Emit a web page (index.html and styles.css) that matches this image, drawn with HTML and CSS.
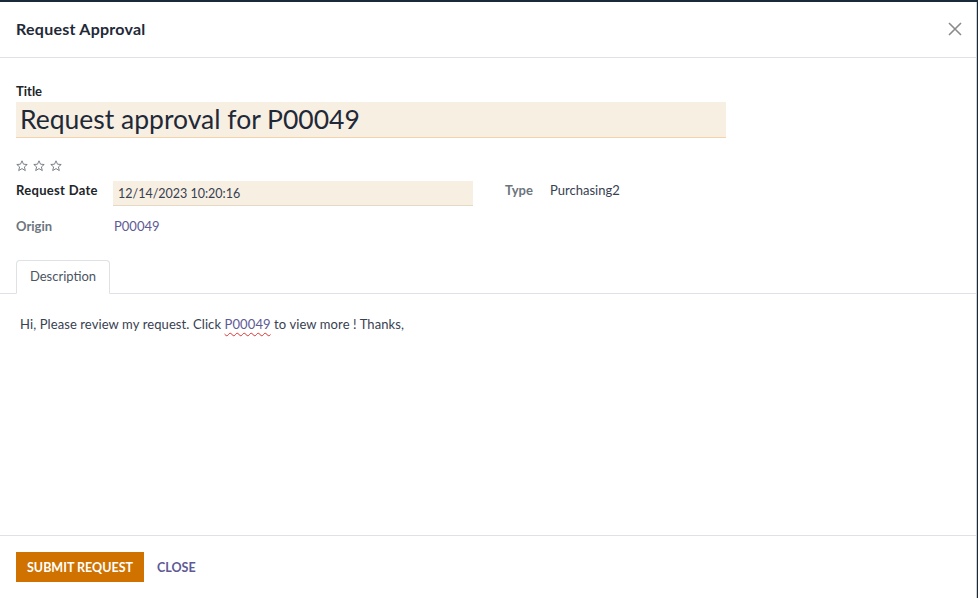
FILE: index.html
```html
<!DOCTYPE html>
<html>
<head>
<meta charset="utf-8">
<link rel="stylesheet" href="styles.css">
</head>
<body>
<div class="backdrop"></div>
<div class="modal">
  <header class="modal-header">
    <h4 class="modal-title">Request Approval</h4>
    <button class="btn-close" aria-label="Close">
      <svg width="14" height="14" viewBox="0 0 14 14"><path d="M1 1 L13 13 M13 1 L1 13" stroke="#8a8a8a" stroke-width="1.6" fill="none"/></svg>
    </button>
  </header>
  <main class="modal-body">
    <div class="sheet">
      <label class="title-label">Title</label>
      <div class="title-input">Request approval for P00049</div>
      <div class="stars">
        <svg width="46" height="12" viewBox="0 0 46 12">
          <g fill="none" stroke="#6c757d" stroke-width="0.9" stroke-linejoin="round">
            <path d="M6 0.8 L7.5 4.2 L11.2 4.5 L8.4 6.9 L9.3 10.6 L6 8.6 L2.7 10.6 L3.6 6.9 L0.8 4.5 L4.5 4.2 Z"/>
            <path transform="translate(17 0)" d="M6 0.8 L7.5 4.2 L11.2 4.5 L8.4 6.9 L9.3 10.6 L6 8.6 L2.7 10.6 L3.6 6.9 L0.8 4.5 L4.5 4.2 Z"/>
            <path transform="translate(34 0)" d="M6 0.8 L7.5 4.2 L11.2 4.5 L8.4 6.9 L9.3 10.6 L6 8.6 L2.7 10.6 L3.6 6.9 L0.8 4.5 L4.5 4.2 Z"/>
          </g>
        </svg>
      </div>
      <div class="fields">
        <div class="group">
          <div class="row">
            <span class="lbl dark">Request Date</span>
            <div class="date-input">12/14/2023 10:20:16</div>
          </div>
          <div class="row origin-row">
            <span class="lbl">Origin</span>
            <a class="link">P00049</a>
          </div>
        </div>
        <div class="group right">
          <div class="row">
            <span class="lbl type-lbl">Type</span>
            <span class="val">Purchasing2</span>
          </div>
        </div>
      </div>
    </div>
    <div class="tabs">
      <div class="tab">Description</div>
    </div>
    <div class="tab-content">
      <p>Hi, Please review my request. Click <span class="spell">P00049</span> to view more ! Thanks,</p>
    </div>
  </main>
  <footer class="modal-footer">
    <button class="btn-primary">SUBMIT REQUEST</button>
    <button class="btn-link">CLOSE</button>
  </footer>
</div>
</body>
</html>
```
FILE: styles.css
```css
* { box-sizing: border-box; }
html, body { margin: 0; padding: 0; }
body {
  width: 978px;
  height: 598px;
  overflow: hidden;
  background: #1b2a38;
  font-family: "Lato", "Noto Sans", sans-serif;
  color: #374151;
  display: flex;
  flex-direction: column;
}
.backdrop { height: 2px; flex: none; }
.modal {
  flex: 1;
  background: #fff;
  display: flex;
  flex-direction: column;
  margin-right: 1px;
  border-right: 1px solid #d0d0d0;
}
.modal-header {
  height: 56px;
  flex: none;
  display: flex;
  align-items: center;
  justify-content: space-between;
  padding: 0 16px 2px 16px;
  border-bottom: 1px solid #dee2e6;
}
.modal-title {
  margin: 0;
  font-size: 16px;
  letter-spacing: 0.25px;
  font-weight: 700;
  color: #1f2937;
}
.btn-close {
  background: none;
  border: 0;
  padding: 0;
  margin-right: -2px;
  width: 14px;
  height: 14px;
  display: flex;
}
.modal-body {
  flex: 1;
  display: flex;
  flex-direction: column;
}
.sheet { padding: 25px 16px 0 16px; }
.title-label {
  display: block;
  font-size: 13px;
  font-weight: 700;
  color: #212529;
  line-height: 16px;
}
.title-input {
  margin-top: 3px;
  width: 710px;
  height: 36px;
  background: #f8efe3;
  border-bottom: 1px solid #f4d3ac;
  font-size: 26.5px;
  line-height: 34px;
  padding-left: 4px;
  color: #1f2937;
}
.stars { margin-top: 22px; height: 12px; line-height: 0; }
.fields {
  display: flex;
  margin-top: 9px;
}
.group { display: flex; flex-direction: column; }
.group.right { margin-left: 32px; }
.row { display: flex; align-items: flex-start; }
.lbl {
  font-size: 13px;
  font-weight: 700;
  color: #6c757d;
  width: 97px;
  padding-top: 1px;
}
.lbl.dark { color: #212529; letter-spacing: 0.3px; }
.type-lbl { width: 45px; }
.date-input {
  width: 360px;
  height: 25px;
  background: #f8efe3;
  border-bottom: 1px solid #e7d8c4;
  font-size: 12.5px;
  padding: 5px 0 0 5px;
  color: #374151;
}
.val { font-size: 13px; padding-top: 1px; color: #374151; }
.origin-row { margin-top: 12px; }
.origin-row .lbl, .origin-row .link { padding-top: 0; }
.link {
  font-size: 13px;
  color: #5e5a94;
  text-decoration: none;
  padding-left: 1px;
}
.tabs {
  margin-top: 27px;
  height: 33px;
  border-bottom: 1px solid #dee2e6;
  padding-left: 16px;
  display: flex;
  align-items: flex-end;
}
.tab {
  width: 94px;
  height: 34px;
  margin-bottom: -1px;
  border: 1px solid #dee2e6;
  border-bottom-color: #fff;
  border-radius: 4px 4px 0 0;
  background: #fff;
  font-size: 13px;
  color: #4b5563;
  text-align: center;
  line-height: 31px;
}
.tab-content { padding: 22px 20px 0 20px; flex: 1; }
.tab-content p {
  margin: 0;
  font-size: 13px;
  letter-spacing: 0.1px;
  color: #374151;
}
.spell {
  color: #5e5a94;
  text-decoration: underline wavy #e03131;
  text-decoration-thickness: 1px;
  text-underline-offset: 3px;
}
.modal-footer {
  flex: none;
  height: 63px;
  border-top: 1px solid #dee2e6;
  display: flex;
  align-items: center;
  padding: 0 16px 0 16px;
  gap: 13px;
}
.btn-primary {
  background: #d07200;
  color: #fff;
  border: 0;
  height: 30px;
  width: 128px;
  font-family: inherit;
  font-size: 12.5px;
  font-weight: 700;
  padding: 0;
}
.btn-link {
  background: none;
  border: 0;
  padding: 0;
  font-family: inherit;
  font-size: 12.5px;
  font-weight: 700;
  color: #5e5a94;
}
```
